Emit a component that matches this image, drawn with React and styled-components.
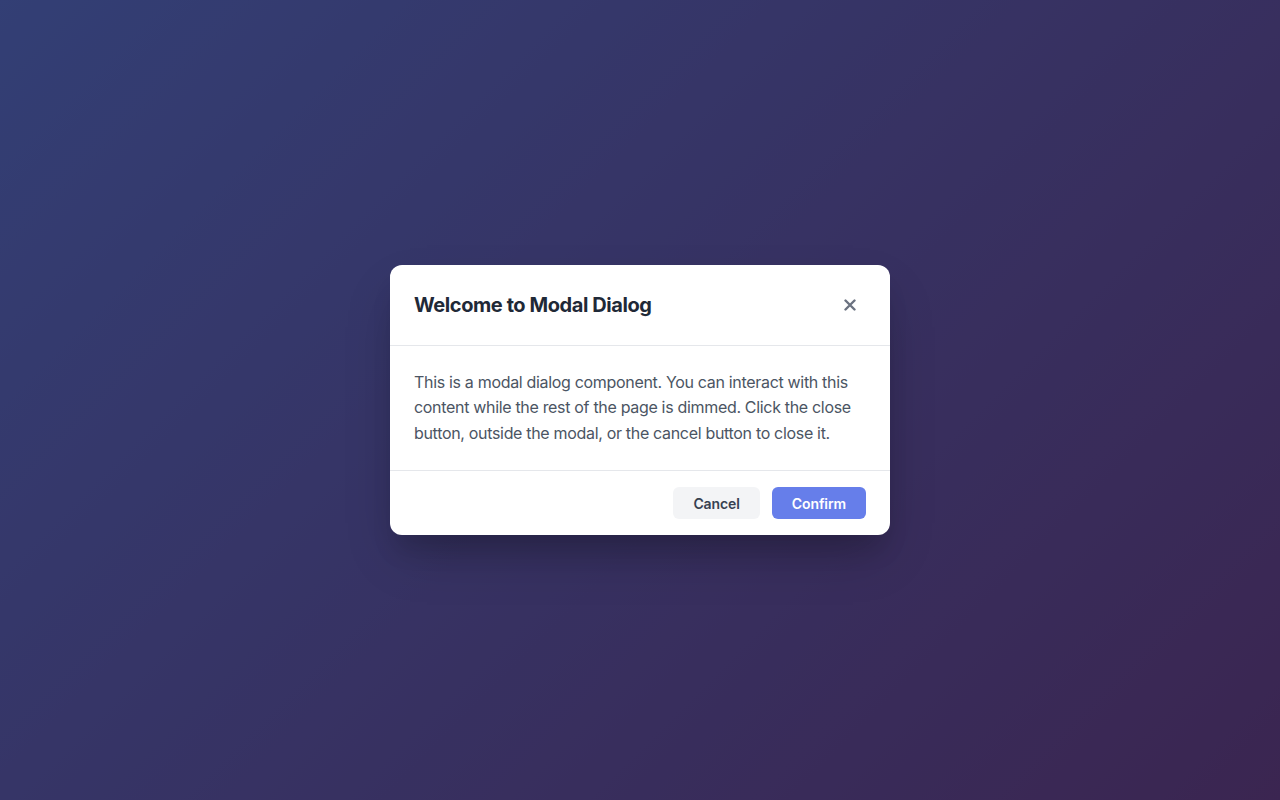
import React from "react";
import styled, { createGlobalStyle } from "styled-components";

const GlobalStyle = createGlobalStyle`
  * { box-sizing: border-box; }
  html, body { margin: 0; padding: 0; }
  body {
    font-family: Inter, "Noto Sans", "Liberation Sans", sans-serif;
    -webkit-font-smoothing: antialiased;
  }
`;

const Page = styled.div`
  width: 100vw;
  height: 100vh;
  background: linear-gradient(135deg, #667eea 0%, #764ba2 100%);
`;

const Overlay = styled.div`
  width: 100%;
  height: 100%;
  background: rgba(0, 0, 0, 0.5);
  display: flex;
  align-items: center;
  justify-content: center;
`;

const Modal = styled.div`
  width: 500px;
  background: #ffffff;
  border-radius: 12px;
  box-shadow: 0 20px 25px -5px rgba(0, 0, 0, 0.1), 0 25px 50px -12px rgba(0, 0, 0, 0.25);
  overflow: hidden;
`;

const Header = styled.div`
  display: flex;
  align-items: center;
  justify-content: space-between;
  padding: 24px;
  border-bottom: 1px solid #e5e7eb;
`;

const Title = styled.h2`
  margin: 0;
  font-size: 20px;
  line-height: 32px;
  font-weight: 700;
  letter-spacing: -0.42px;
  color: #1f2937;
`;

const CloseBtn = styled.button`
  width: 32px;
  height: 32px;
  border: none;
  background: transparent;
  border-radius: 6px;
  display: flex;
  align-items: center;
  justify-content: center;
  color: #6b7280;
  cursor: pointer;
  padding: 0;
`;

const Body = styled.div`
  padding: 24px;
  font-size: 16px;
  line-height: 1.6;
  letter-spacing: -0.32px;
  color: #4b5563;
`;

const Text = styled.p`
  margin: 0;
`;

const Footer = styled.div`
  display: flex;
  justify-content: flex-end;
  gap: 12px;
  padding: 16px 24px;
  border-top: 1px solid #e5e7eb;
`;

const Btn = styled.button`
  height: 32px;
  padding: 0 20px;
  border: none;
  border-radius: 6px;
  font-family: inherit;
  font-size: 14px;
  font-weight: 600;
  letter-spacing: -0.1px;
  cursor: pointer;
  background: ${(p) => (p.primary ? "#667eea" : "#f3f4f6")};
  color: ${(p) => (p.primary ? "#ffffff" : "#374151")};
`;

export default function App() {
  return (
    <>
      <GlobalStyle />
      <Page>
        <Overlay>
          <Modal>
            <Header>
              <Title>Welcome to Modal Dialog</Title>
              <CloseBtn aria-label="Close">
                <svg width="12" height="12" viewBox="0 0 12 12">
                  <path d="M1.5 1.5 L10.5 10.5 M10.5 1.5 L1.5 10.5" stroke="currentColor" strokeWidth="2.4" strokeLinecap="round" />
                </svg>
              </CloseBtn>
            </Header>
            <Body>
              <Text>
                This is a modal dialog component. You can interact with this content while the rest of the page is dimmed. Click the close button, outside the modal, or the cancel button to close it.
              </Text>
            </Body>
            <Footer>
              <Btn>Cancel</Btn>
              <Btn primary>Confirm</Btn>
            </Footer>
          </Modal>
        </Overlay>
      </Page>
    </>
  );
}
